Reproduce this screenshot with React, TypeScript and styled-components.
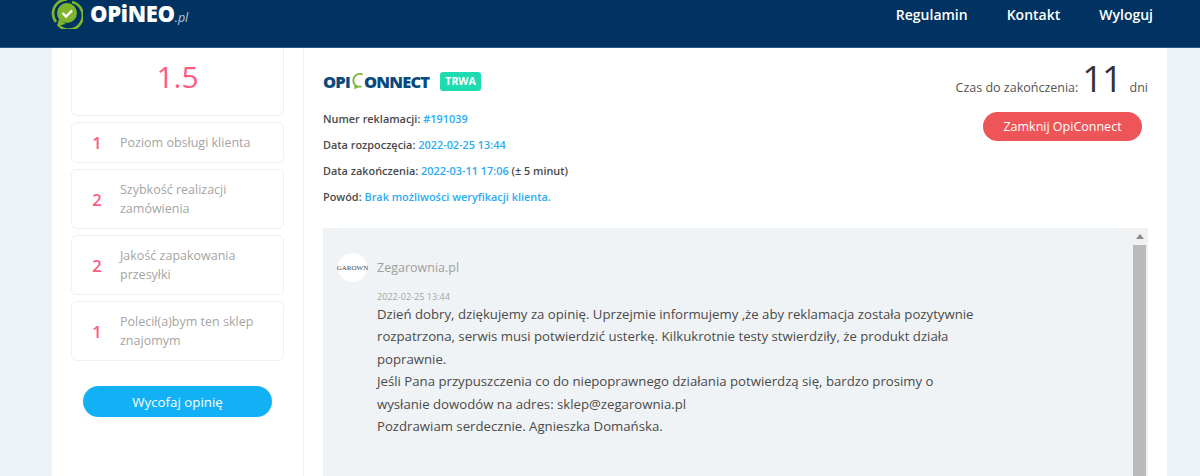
import React from 'react'
import styled, {createGlobalStyle} from 'styled-components'

const GlobalStyle = createGlobalStyle`
  html, body {
    margin: 0;
    height: 476px;
    overflow: hidden;
    background: #edf2f7;
    font-family: "Open Sans", "Noto Sans", sans-serif;
  }
  * {
    box-sizing: border-box;
  }
`

const Header = styled.header`
  height: 48px;
  background: #003361;
  border-bottom: 1px solid #2c5a84;
  display: flex;
  justify-content: space-between;
  padding: 0 47px 0 51px;
`
const Logo = styled.div`
  display: flex;
  align-items: flex-start;
  gap: 7px;
  height: 29px;
`
const LogoWord = styled.span`
  font-size: 22px;
  font-weight: 800;
  line-height: 26px;
  letter-spacing: -0.3px;
  color: #fff;
`
const LogoTld = styled.span`
  font-size: 12.5px;
  font-weight: 400;
  font-style: italic;
  letter-spacing: 0;
  color: #b9c9d8;
`
const Nav = styled.nav`
  display: flex;
  gap: 39px;
  height: 28px;
  align-items: center;
`
const NavLink = styled.a`
  font-size: 14px;
  font-weight: 600;
  color: #fff;
`

const Card = styled.main`
  width: 1115px;
  height: 428px;
  margin-left: 52px;
  background: #fff;
  display: grid;
  grid-template-columns: 252px 1fr;
`
const Sidebar = styled.aside`
  border-right: 1px solid #eef0f2;
  padding: 0 19px;
  display: flex;
  flex-direction: column;
  gap: 6px;
`
const ScoreBox = styled.div`
  height: 68px;
  border: 1px solid #eff0f1;
  border-top: none;
  border-radius: 0 0 6px 6px;
  text-align: center;
  font-size: 30px;
  font-weight: 500;
  line-height: 58px;
  color: #fd5c80;
`
const RatingRow = styled.div<{$tall?: boolean}>`
  height: ${(props) => (props.$tall ? '60px' : '41px')};
  border: 1px solid #eff0f1;
  border-radius: 6px;
  display: grid;
  grid-template-columns: 48px 1fr;
  align-items: center;
`
const RatingValue = styled.span`
  font-size: 16.5px;
  font-weight: 600;
  color: #fd5c80;
  text-align: center;
  padding-left: 2px;
`
const RatingLabel = styled.span`
  font-size: 12.5px;
  line-height: 19px;
  color: #a5a5a5;
  max-width: 140px;
`
const WithdrawButton = styled.button`
  width: 189px;
  height: 31px;
  margin: 19px 0 0 12px;
  border: none;
  border-radius: 16px;
  background: #12b1f5;
  color: #fff;
  font-family: inherit;
  font-size: 13.3px;
`

const Content = styled.section`
  padding: 19px 19px 0 19px;
`
const Top = styled.div`
  display: flex;
  justify-content: space-between;
  height: 161px;
`
const TitleRow = styled.div`
  display: flex;
  align-items: center;
  gap: 11px;
  height: 28px;
`
const Brand = styled.div`
  display: flex;
  align-items: center;
  font-size: 16.5px;
  font-weight: 800;
  letter-spacing: -0.8px;
  color: #0a4a7c;
`
const Badge = styled.span`
  background: #1fdcb0;
  color: #fff;
  font-size: 10.5px;
  font-weight: 700;
  border-radius: 3px;
  padding: 3px 5px;
  line-height: 13px;
`
const Details = styled.div`
  margin-top: 15px;
  display: flex;
  flex-direction: column;
  gap: 9px;
`
const DetailLine = styled.div`
  font-size: 10.9px;
  line-height: 17px;
  font-weight: 600;
  color: #4a4a4a;
`
const Accent = styled.span`
  color: #2aabf2;
`
const Aside = styled.div`
  display: flex;
  flex-direction: column;
  align-items: flex-end;
`
const Countdown = styled.div`
  display: flex;
  align-items: baseline;
  font-size: 12.5px;
  color: #555;
  height: 45px;
`
const CountdownNumber = styled.span`
  font-size: 36px;
  font-weight: 500;
  line-height: 24px;
  letter-spacing: -1px;
  color: #333;
  margin: 0 8px 0 4px;
`
const CloseButton = styled.button`
  width: 159px;
  height: 29px;
  margin: 0 6px 0 0;
  border: none;
  border-radius: 15px;
  background: #ee5558;
  color: #fff;
  font-family: inherit;
  font-size: 12.5px;
`

const Thread = styled.div`
  height: 248px;
  background: #f0f3f5;
  display: grid;
  grid-template-columns: 1fr 17px;
`
const Message = styled.article`
  padding: 25px 0 0 15px;
`
const Sender = styled.div`
  display: flex;
  align-items: center;
  gap: 10px;
`
const Avatar = styled.div`
  width: 29px;
  height: 29px;
  border-radius: 50%;
  background: #fff;
  display: flex;
  align-items: center;
  justify-content: center;
  font-family: "Liberation Serif", serif;
  font-size: 7px;
  color: #444;
`
const SenderName = styled.span`
  font-size: 12.5px;
  color: #a0a0a0;
`
const MessageBody = styled.div`
  margin: 10px 0 0 39px;
`
const Timestamp = styled.div`
  font-size: 9.1px;
  line-height: 10.5px;
  color: #a5a5a5;
`
const MessageText = styled.p`
  margin: 0;
  font-size: 13.2px;
  line-height: 22.6px;
  color: #4a4a4a;
  max-width: 620px;
`
const Scrollbar = styled.div`
  background: #f1f1f1;
  display: flex;
  flex-direction: column;
  align-items: center;
`
const ScrollArrow = styled.div`
  height: 17px;
  display: flex;
  align-items: center;
  justify-content: center;
`
const ScrollThumb = styled.div`
  flex: 1;
  width: 13px;
  background: #bababa;
`

const LogoMark = () => (
  <svg width="32" height="29" viewBox="0 1 32 29">
    <path d="M21 3 A14 14 0 1 1 7 25.5" fill="none" stroke="#7fb52d" strokeWidth="2.6" />
    <path d="M2 14 A14 14 0 0 1 16 0.5" fill="none" stroke="#7fb52d" strokeWidth="2.6" />
    <path d="M2 14 A14 14 0 0 0 5 23" fill="none" stroke="#7fb52d" strokeWidth="2.6" />
    <circle cx="16" cy="14" r="10" fill="#7fb52d" />
    <path d="M8 20 L6 27 L15 25 Z" fill="#7fb52d" />
    <path d="M11.5 14 L15 17.5 L21 11.5" fill="none" stroke="#fff" strokeWidth="2.4" />
  </svg>
)

const ConnectMark = () => (
  <svg width="14" height="18" viewBox="0 0 14 18">
    <path d="M12.6 2.4 A6.6 6.6 0 1 0 7.2 14.6 L11.5 14.6" fill="none" stroke="#79b52e" strokeWidth="1.8" />
    <path d="M4.5 13 L4.5 17.5 L9 14.5 Z" fill="#79b52e" />
  </svg>
)

const ratings = [
  {value: 1, label: 'Poziom obsługi klienta'},
  {value: 2, label: 'Szybkość realizacji zamówienia', tall: true},
  {value: 2, label: 'Jakość zapakowania przesyłki', tall: true},
  {value: 1, label: 'Polecił(a)bym ten sklep znajomym', tall: true},
]

export default function App() {
  return (
    <>
      <GlobalStyle />
      <Header>
        <Logo>
          <LogoMark />
          <LogoWord>OPiNEO<LogoTld>.pl</LogoTld></LogoWord>
        </Logo>
        <Nav>
          <NavLink>Regulamin</NavLink>
          <NavLink>Kontakt</NavLink>
          <NavLink>Wyloguj</NavLink>
        </Nav>
      </Header>
      <Card>
        <Sidebar>
          <ScoreBox>1.5</ScoreBox>
          {ratings.map((r) => (
            <RatingRow key={r.label} $tall={r.tall}>
              <RatingValue>{r.value}</RatingValue>
              <RatingLabel>{r.label}</RatingLabel>
            </RatingRow>
          ))}
          <WithdrawButton>Wycofaj opinię</WithdrawButton>
        </Sidebar>
        <Content>
          <Top>
            <div>
              <TitleRow>
                <Brand>OPI<ConnectMark />ONNECT</Brand>
                <Badge>TRWA</Badge>
              </TitleRow>
              <Details>
                <DetailLine>Numer reklamacji: <Accent>#191039</Accent></DetailLine>
                <DetailLine>Data rozpoczęcia: <Accent>2022-02-25 13:44</Accent></DetailLine>
                <DetailLine>Data zakończenia: <Accent>2022-03-11 17:06</Accent> (± 5 minut)</DetailLine>
                <DetailLine>Powód: <Accent>Brak możliwości weryfikacji klienta.</Accent></DetailLine>
              </Details>
            </div>
            <Aside>
              <Countdown>
                Czas do zakończenia:
                <CountdownNumber>11</CountdownNumber>
                dni
              </Countdown>
              <CloseButton>Zamknij OpiConnect</CloseButton>
            </Aside>
          </Top>
          <Thread>
            <Message>
              <Sender>
                <Avatar>GAROWN</Avatar>
                <SenderName>Zegarownia.pl</SenderName>
              </Sender>
              <MessageBody>
                <Timestamp>2022-02-25 13:44</Timestamp>
                <MessageText>
                  Dzień dobry, dziękujemy za opinię. Uprzejmie informujemy ,że aby reklamacja została pozytywnie<br />
                  rozpatrzona, serwis musi potwierdzić usterkę. Kilkukrotnie testy stwierdziły, że produkt działa<br />
                  poprawnie.<br />
                  Jeśli Pana przypuszczenia co do niepoprawnego działania potwierdzą się, bardzo prosimy o<br />
                  wysłanie dowodów na adres: sklep@zegarownia.pl<br />
                  Pozdrawiam serdecznie. Agnieszka Domańska.
                </MessageText>
              </MessageBody>
            </Message>
            <Scrollbar>
              <ScrollArrow>
                <svg width="8" height="5" viewBox="0 0 8 5"><path d="M0 5 L4 0 L8 5 Z" fill="#8a8a8a" /></svg>
              </ScrollArrow>
              <ScrollThumb />
            </Scrollbar>
          </Thread>
        </Content>
      </Card>
    </>
  )
}
